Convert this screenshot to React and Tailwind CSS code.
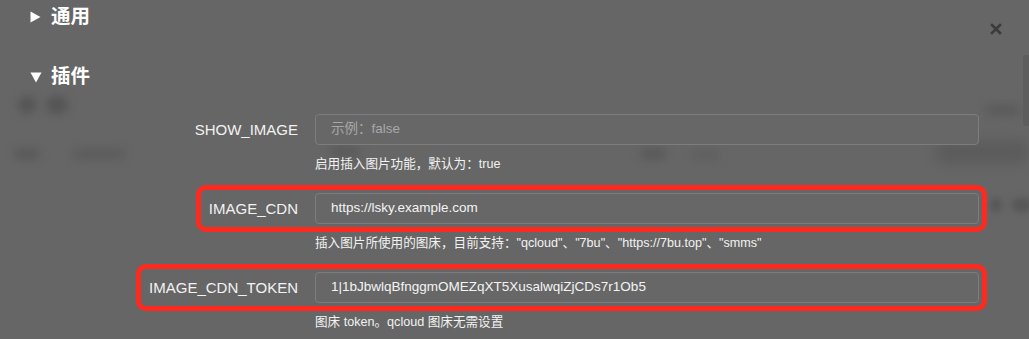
import React from "react";

const font = { fontFamily: '"Liberation Sans", "Noto Sans CJK SC", sans-serif' };

function Row({ label, value, placeholder, help, highlight }) {
  return (
    <div className="flex flex-col">
      <div className="flex w-[987px] justify-end">
        <div
          className={
            "flex items-center gap-[17px] pl-[8px] pr-[3px] py-[3px] rounded-[10px] border-[5px] " +
            (highlight ? "border-[#ff2a1f]" : "border-transparent")
          }
        >
          <span className="text-[15px] leading-[20px] text-[#f2f2f2]">{label}</span>
          <div className="w-[664px] h-[31px] rounded-[4px] border border-[#7d7d7d] bg-[#676767] flex items-center px-[15px]">
            {value ? (
              <span className="text-[13.5px] text-[#f4f4f4]">{value}</span>
            ) : (
              <span className="text-[13.5px] text-[#a8a8a8]">{placeholder}</span>
            )}
          </div>
        </div>
      </div>
      <div className="ml-[315px] mt-[3px] text-[12.6px] leading-[17px] text-[#f2f2f2]">{help}</div>
    </div>
  );
}

export default function App() {
  return (
    <div className="relative w-[1029px] h-[339px] overflow-hidden bg-[#666666]" style={font}>
      {/* blurred page behind the overlay */}
      <div className="absolute left-[18px] top-[96px] w-[18px] h-[18px] rounded-full bg-[#555] blur-[4px]" />
      <div className="absolute left-[46px] top-[96px] w-[22px] h-[18px] rounded-full bg-[#555] blur-[4px]" />
      <div className="absolute left-[14px] top-[148px] w-[26px] h-[12px] rounded-full bg-[#5a5a5a] blur-[4px]" />
      <div className="absolute left-[72px] top-[148px] w-[54px] h-[12px] rounded-full bg-[#5d5d5d] blur-[4px]" />
      <div className="absolute left-[330px] top-[146px] w-[30px] h-[12px] rounded-full bg-[#5a5a5a] blur-[5px]" />
      <div className="absolute left-[640px] top-[148px] w-[26px] h-[12px] rounded-full bg-[#5a5a5a] blur-[4px]" />
      <div className="absolute left-[690px] top-[150px] w-[30px] h-[10px] rounded-full bg-[#606060] blur-[4px]" />
      <div className="absolute left-[985px] top-[104px] w-[36px] h-[12px] rounded-full bg-[#5c5c5c] blur-[4px]" />
      <div className="absolute left-[935px] top-[140px] w-[94px] h-[24px] rounded-full bg-[#5c5c5c] blur-[6px]" />
      <div className="absolute left-[990px] top-[198px] w-[12px] h-[14px] rounded-full bg-[#575757] blur-[3px]" />
      <div className="absolute left-[1012px] top-[198px] w-[20px] h-[14px] rounded-full bg-[#575757] blur-[3px]" />

      {/* close */}
      <svg className="absolute left-[990px] top-[23px]" width="12" height="12" viewBox="0 0 12 12">
        <path d="M2 2 L10 10 M10 2 L2 10" stroke="#3b3b3b" strokeWidth="2.6" strokeLinecap="square" />
      </svg>
      {/* scrollbar */}
      <div className="absolute right-0 top-[55px] w-[6px] h-[71px] rounded-l-[3px] bg-[#5d5d5d]" />

      <div className="relative flex flex-col pt-[3px]">
        <div className="flex items-center h-[28px] pl-[30px] gap-[10px]">
          <svg width="11" height="12" viewBox="0 0 11 12">
            <path d="M0.5 0.5 L10.5 6 L0.5 11.5 Z" fill="#ffffff" />
          </svg>
          <span className="text-[19.5px] font-bold text-white">通用</span>
        </div>
        <div className="flex items-center h-[28px] pl-[30px] gap-[9px] mt-[32px]">
          <svg width="12" height="11" viewBox="0 0 12 11">
            <path d="M0.5 0.5 L11.5 0.5 L6 10.5 Z" fill="#ffffff" />
          </svg>
          <span className="text-[19.5px] font-bold text-white">插件</span>
        </div>

        <div className="flex flex-col gap-[12px] mt-[15px]">
          <Row label="SHOW_IMAGE" placeholder="示例：false" help="启用插入图片功能，默认为：true" />
          <Row
            label="IMAGE_CDN"
            value="https://lsky.example.com"
            help={'插入图片所使用的图床，目前支持："qcloud"、"7bu"、"https://7bu.top"、"smms"'}
            highlight
          />
          <Row
            label="IMAGE_CDN_TOKEN"
            value="1|1bJbwlqBfnggmOMEZqXT5XusalwqiZjCDs7r1Ob5"
            help="图床 token。qcloud 图床无需设置"
            highlight
          />
        </div>
      </div>
    </div>
  );
}
